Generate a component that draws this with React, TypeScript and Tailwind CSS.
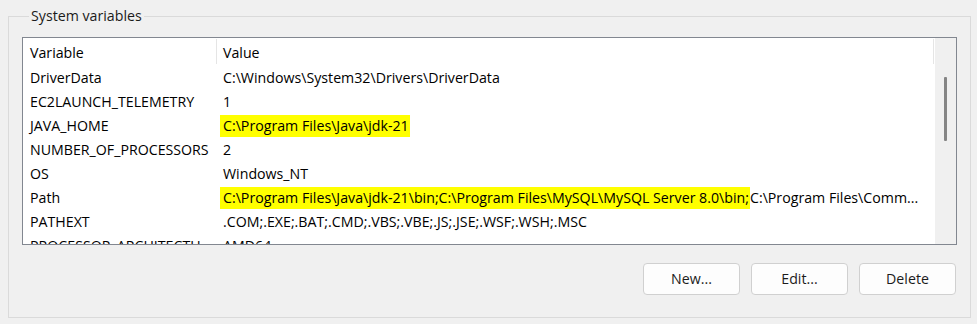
import React from 'react';

type Row = {
  name: string;
  value: string;
  mark?: string;
};

const rows: Row[] = [
  { name: 'DriverData', value: 'C:\\Windows\\System32\\Drivers\\DriverData' },
  { name: 'EC2LAUNCH_TELEMETRY', value: '1' },
  { name: 'JAVA_HOME', value: '', mark: 'C:\\Program Files\\Java\\jdk-21' },
  { name: 'NUMBER_OF_PROCESSORS', value: '2' },
  { name: 'OS', value: 'Windows_NT' },
  {
    name: 'Path',
    mark: 'C:\\Program Files\\Java\\jdk-21\\bin;C:\\Program Files\\MySQL\\MySQL Server 8.0\\bin;',
    value: 'C:\\Program Files\\Comm...',
  },
  { name: 'PATHEXT', value: '.COM;.EXE;.BAT;.CMD;.VBS;.VBE;.JS;.JSE;.WSF;.WSH;.MSC' },
  { name: 'PROCESSOR_ARCHITECTURE', value: 'AMD64' },
];

const Button: React.FC<{ label: string }> = ({ label }) => (
  <button className="w-[97px] h-[32px] rounded-[4px] border border-[#d0d0d0] bg-[#fdfdfd] text-[#1b1b1b]">
    {label}
  </button>
);

export default function App() {
  return (
    <div
      className="w-[977px] h-[324px] bg-[#f0f0f0] pl-[8px] pr-[6px] pt-[6px] text-[14.2px] text-black"
      style={{ fontFamily: '"Open Sans", "Noto Sans", sans-serif' }}
    >
      <fieldset className="h-[312px] border border-[#dadada] px-[13px] pb-[20px]">
        <legend className="ml-[7px] px-[2px] leading-[20px] text-[#1b1b1b]">System variables</legend>

        <div className="mt-[11px] h-[208px] border border-[#828790] bg-white flex overflow-hidden">
          <div className="flex-1 min-w-0">
            <div className="h-[27px] flex items-center">
              <div className="w-[193px] shrink-0 pl-[7px] h-[25px] pt-[3px] flex items-center">Variable</div>
              <div className="w-px h-[25px] bg-[#e5e5e5]" />
              <div className="flex-1 pl-[6px] h-[25px] pt-[3px] flex items-center">Value</div>
              <div className="w-px h-[25px] bg-[#e5e5e5]" />
              <div className="w-[1px]" />
            </div>
            {rows.map(row => (
              <div key={row.name} className="h-[24px] pt-[2px] flex items-center whitespace-nowrap">
                <div className="w-[194px] shrink-0 pl-[7px] pr-[2px] truncate">{row.name}</div>
                <div className="flex-1 min-w-0 pl-[6px] truncate">
                  {row.mark && (
                    <span className="-ml-[3px] pl-[3px] pr-[1px] py-[3px] bg-[#ffff00]">{row.mark}</span>
                  )}
                  {row.value}
                </div>
              </div>
            ))}
          </div>
          <div className="w-[21px] shrink-0 bg-[#f0f0f0] flex justify-center pt-[39px]">
            <div className="w-[3px] h-[64px] bg-[#858585] rounded-[1px]" />
          </div>
        </div>

        <div className="mt-[18px] flex justify-end gap-[11px] pr-[1px]">
          <Button label="New..." />
          <Button label="Edit..." />
          <Button label="Delete" />
        </div>
      </fieldset>
    </div>
  );
}
